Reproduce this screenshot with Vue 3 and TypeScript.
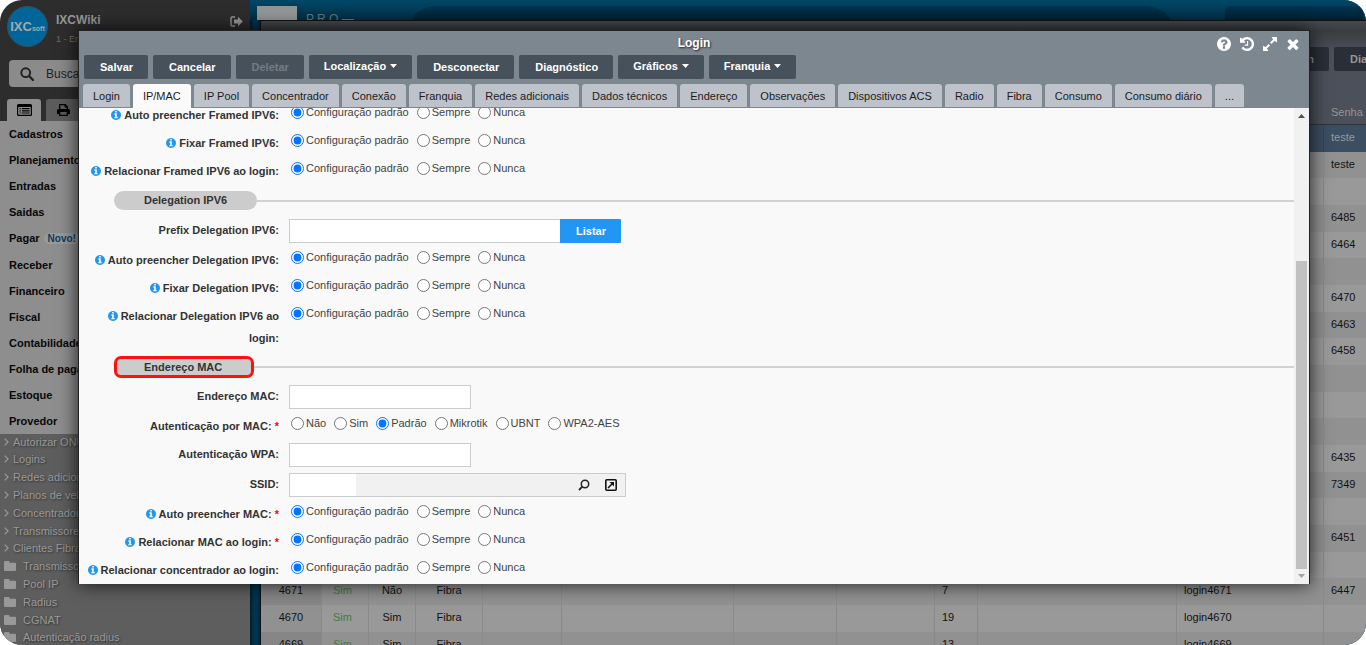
<script setup lang="ts">
import { ref, reactive } from 'vue'

interface ListRow {
  id?: string
  active?: string
  online?: string
  kind?: string
  count?: string
  login?: string
  password?: string
}

interface Field {
  id: string
  label: string
  info?: boolean
  required?: boolean
  type: 'radio' | 'text' | 'lookup' | 'prefix' | 'section'
  options?: string[]
  highlighted?: boolean
}

const menu = [
  'Cadastros', 'Planejamento', 'Entradas', 'Saidas', 'Pagar', 'Receber',
  'Financeiro', 'Fiscal', 'Contabilidade', 'Folha de pagamento', 'Estoque', 'Provedor',
]

const submenu = [
  { text: 'Autorizar ONU', folder: false },
  { text: 'Logins', folder: false },
  { text: 'Redes adicionais', folder: false },
  { text: 'Planos de velocidade', folder: false },
  { text: 'Concentradores', folder: false },
  { text: 'Transmissores', folder: false },
  { text: 'Clientes Fibra', folder: false },
  { text: 'Transmissores', folder: true },
  { text: 'Pool IP', folder: true },
  { text: 'Radius', folder: true },
  { text: 'CGNAT', folder: true },
  { text: 'Autenticação radius', folder: true },
]

const rows: ListRow[] = [
  { password: 'teste' }, { password: 'teste' }, {}, { password: '6485' }, { password: '6464' },
  {}, { password: '6470' }, { password: '6463' }, { password: '6458' }, {}, {}, {},
  { password: '6435' }, { password: '7349' }, {}, { password: '6451' }, {},
  { id: '4671', active: 'Sim', online: 'Não', kind: 'Fibra', count: '7', login: 'login4671', password: '6447' },
  { id: '4670', active: 'Sim', online: 'Sim', kind: 'Fibra', count: '19', login: 'login4670' },
  { id: '4669', active: 'Sim', online: 'Sim', kind: 'Fibra', count: '13', login: 'login4669' },
]

const actions = [
  { text: 'Salvar' },
  { text: 'Cancelar' },
  { text: 'Deletar', disabled: true },
  { text: 'Localização', menu: true },
  { text: 'Desconectar' },
  { text: 'Diagnóstico' },
  { text: 'Gráficos', menu: true },
  { text: 'Franquia', menu: true },
]

const tabs = [
  'Login', 'IP/MAC', 'IP Pool', 'Concentrador', 'Conexão', 'Franquia', 'Redes adicionais',
  'Dados técnicos', 'Endereço', 'Observações', 'Dispositivos ACS', 'Radio', 'Fibra',
  'Consumo', 'Consumo diário', '...',
]
const activeTab = ref('IP/MAC')

const standard = ['Configuração padrão', 'Sempre', 'Nunca']
const fields: Field[] = [
  { id: 'framed-auto', label: 'Auto preencher Framed IPV6:', info: true, type: 'radio', options: standard },
  { id: 'framed-fix', label: 'Fixar Framed IPV6:', info: true, type: 'radio', options: standard },
  { id: 'framed-link', label: 'Relacionar Framed IPV6 ao login:', info: true, type: 'radio', options: standard },
  { id: 'sec-delegation', label: 'Delegation IPV6', type: 'section' },
  { id: 'prefix', label: 'Prefix Delegation IPV6:', type: 'prefix' },
  { id: 'deleg-auto', label: 'Auto preencher Delegation IPV6:', info: true, type: 'radio', options: standard },
  { id: 'deleg-fix', label: 'Fixar Delegation IPV6:', info: true, type: 'radio', options: standard },
  { id: 'deleg-link', label: 'Relacionar Delegation IPV6 ao login:', info: true, type: 'radio', options: standard },
  { id: 'sec-mac', label: 'Endereço MAC', type: 'section', highlighted: true },
  { id: 'mac', label: 'Endereço MAC:', type: 'text' },
  { id: 'mac-auth', label: 'Autenticação por MAC:', required: true, type: 'radio', options: ['Não', 'Sim', 'Padrão', 'Mikrotik', 'UBNT', 'WPA2-AES'] },
  { id: 'wpa', label: 'Autenticação WPA:', type: 'text' },
  { id: 'ssid', label: 'SSID:', type: 'lookup' },
  { id: 'mac-auto', label: 'Auto preencher MAC:', info: true, required: true, type: 'radio', options: standard },
  { id: 'mac-link', label: 'Relacionar MAC ao login:', info: true, required: true, type: 'radio', options: standard },
  { id: 'conc-link', label: 'Relacionar concentrador ao login:', info: true, type: 'radio', options: standard },
]

const values = reactive<Record<string, string>>({})
for (const f of fields) {
  values[f.id] = f.type === 'radio' ? (f.id === 'mac-auth' ? 'Padrão' : standard[0]) : ''
}

const icons = [
  { name: 'Ajuda', d: 'M1024 1376v-192q0-14-9-23t-23-9h-192q-14 0-23 9t-9 23v192q0 14 9 23t23 9h192q14 0 23-9t9-23zm256-672q0-88-55.5-163t-138.5-116-170-41q-243 0-371 213-15 24 8 42l132 100q7 6 19 6 16 0 25-12 53-68 86-92 34-24 86-24 48 0 85.5 26t37.5 59q0 38-20 61t-68 45q-63 28-115.5 86.5t-52.5 125.5v36q0 14 9 23t23 9h192q14 0 23-9t9-23q0-19 21.5-49.5t54.5-49.5q32-18 49-28.5t46-35 44.5-48 28-60.5 12.5-81zm384 192q0 209-103 385.5t-279.5 279.5-385.5 103-385.5-103-279.5-279.5-103-385.5 103-385.5 279.5-279.5 385.5-103 385.5 103 279.5 279.5 103 385.5z' },
  { name: 'Histórico', d: 'M1664 896q0 156-61 298t-164 245-245 164-298 61q-172 0-327-72.5t-264-204.5q-7-10-6.5-22.5t8.5-20.5l137-138q10-9 25-9 16 2 23 12 73 95 179 147t225 52q104 0 198.5-40.5t163.5-109.5 109.5-163.5 40.5-198.5-40.5-198.5-109.5-163.5-163.5-109.5-198.5-40.5q-98 0-188 35.5t-160 101.5l137 138q31 30 14 69-17 40-59 40h-448q-26 0-45-19t-19-45v-448q0-42 40-59 39-17 69 14l130 129q107-101 244.5-156.5t284.5-55.5q156 0 298 61t245 164 164 245 61 298zm-640-288v448q0 14-9 23t-23 9h-320q-14 0-23-9t-9-23v-64q0-14 9-23t23-9h224v-352q0-14 9-23t23-9h64q14 0 23 9t9 23z' },
  { name: 'Expandir', d: 'M883 1056q0 13-10 23l-332 332 144 144q19 19 19 45t-19 45-45 19h-448q-26 0-45-19t-19-45v-448q0-26 19-45t45-19 45 19l144 144 332-332q10-10 23-10t23 10l114 114q10 10 10 23zm781-864v448q0 26-19 45t-45 19-45-19l-144-144-332 332q-10 10-23 10t-23-10l-114-114q-10-10-10-23t10-23l332-332-144-144q-19-19-19-45t19-45 45-19h448q26 0 45 19t19 45z' },
  { name: 'Fechar', d: 'M1490 1322q0 40-28 68l-136 136q-28 28-68 28t-68-28l-294-294-294 294q-28 28-68 28t-68-28l-136-136q-28-28-28-68t28-68l294-294-294-294q-28-28-28-68t28-68l136-136q28-28 68-28t68 28l294 294 294-294q28-28 68-28t68 28l136 136q28 28 28 68t-28 68l-294 294 294 294q28 28 28 68z' },
]
const infoPath = 'M1024 1376v-160q0-14-9-23t-23-9h-96v-512q0-14-9-23t-23-9h-320q-14 0-23 9t-9 23v160q0 14 9 23t23 9h96v320h-96q-14 0-23 9t-9 23v160q0 14 9 23t23 9h448q14 0 23-9t9-23zm-128-896v-160q0-14-9-23t-23-9h-192q-14 0-23 9t-9 23v160q0 14 9 23t23 9h192q14 0 23-9t9-23zm640 416q0 209-103 385.5t-279.5 279.5-385.5 103-385.5-103-279.5-279.5-103-385.5 103-385.5 279.5-279.5 385.5-103 385.5 103 279.5 279.5 103 385.5z'
</script>

<template>
  <div class="desktop">
    <aside class="sidebar">
      <header class="profile">
        <div class="logo"><b>IXC</b><small>soft</small></div>
        <div class="who">
          <strong>IXCWiki</strong>
          <span>1 - Empresa</span>
        </div>
        <button class="exit" aria-label="Sair">
          <svg width="13" height="11" viewBox="0 0 13 11">
            <path d="M5 1H2.200A1.200 1.200 0 0 0 1 2.200v6.600A1.200 1.200 0 0 0 2.200 10H5" fill="none" stroke="currentColor" stroke-width="1.400" />
            <path d="M4 3.600h4V.8l4.800 4.700L8 10.200V7.400H4z" fill="currentColor" />
          </svg>
        </button>
      </header>
      <label class="search">
        <svg width="14" height="14" viewBox="0 0 14 14">
          <circle cx="5.700" cy="5.700" r="4.400" fill="none" stroke="currentColor" stroke-width="2" />
          <path d="M9 9l4 4" stroke="currentColor" stroke-width="2.400" stroke-linecap="round" />
        </svg>
        <input type="text" placeholder="Buscar" aria-label="Buscar" />
      </label>
      <div class="side-tabs">
        <button class="on" aria-label="Menu">
          <svg width="15" height="12" viewBox="0 0 15 12">
            <path d="M1.500 0h12A1.500 1.500 0 0 1 15 1.500v9A1.500 1.500 0 0 1 13.500 12h-12A1.500 1.500 0 0 1 0 10.500v-9A1.500 1.500 0 0 1 1.500 0zM1.200 3v7.300q0 .5.5.5h11.600q.5 0 .5-.5V3z" fill-rule="evenodd" />
            <path d="M2.500 4h1.200v1.200H2.500zm0 2.200h1.200v1.200H2.500zm0 2.200h1.200v1.200H2.500zM4.800 4h7.800v1.200H4.800zm0 2.200h7.800v1.200H4.800zm0 2.200h7.800v1.200H4.800z" />
          </svg>
        </button>
        <button aria-label="Imprimir">
          <svg width="13" height="12" viewBox="0 0 13 12">
            <path d="M2.700 5.500V.7h5.600l2 2v2.800" fill="none" stroke="#000" stroke-width="1.300" />
            <path d="M8 .7v2.400h2.300" fill="none" stroke="#000" />
            <path d="M1.500 5h10A1.500 1.500 0 0 1 13 6.500V10h-2.200V8H2.200v2H0V6.500A1.500 1.500 0 0 1 1.500 5z" />
            <path d="M2.700 8v3.300h7.600V8" fill="none" stroke="#000" stroke-width="1.300" />
          </svg>
        </button>
      </div>
      <nav class="menu">
        <a v-for="item in menu" :key="item" href="#">{{ item }}<em v-if="item === 'Pagar'">Novo!</em></a>
      </nav>
      <nav class="submenu">
        <a v-for="(item, i) in submenu" :key="i" href="#" :class="{ folder: item.folder }">
          <svg v-if="item.folder" width="12" height="10" viewBox="0 0 12 10">
            <path d="M1 0h3.500a1 1 0 0 1 1 1v.8H11a1 1 0 0 1 1 1V9a1 1 0 0 1-1 1H1a1 1 0 0 1-1-1V1a1 1 0 0 1 1-1z" fill="currentColor" />
          </svg>
          <svg v-else width="5" height="8" viewBox="0 0 5 8">
            <path d="M.7.7L4 4 .7 7.300" fill="none" stroke="currentColor" stroke-width="1.200" />
          </svg>
          {{ item.text }}
        </a>
      </nav>
    </aside>

    <main class="workspace">
      <div class="topbar">
        <div class="thumb"></div>
        <span class="brand">P R O —</span>
        <div class="pane wide"></div>
        <div class="pane narrow"></div>
      </div>
      <section class="list">
        <div class="list-head">
          <button>Login</button>
          <button>Diagnóstico</button>
        </div>
        <table>
          <colgroup>
            <col v-for="n in 12" :key="n" :class="'c' + n" />
          </colgroup>
          <thead>
            <tr><th v-for="n in 11" :key="n"></th><th>Senha</th></tr>
          </thead>
          <tbody>
            <tr v-for="(r, i) in rows" :key="i" :class="{ selected: i === 0 }">
              <td class="mid">{{ r.id }}</td>
              <td class="mid yes">{{ r.active }}</td>
              <td class="mid">{{ r.online }}</td>
              <td class="mid">{{ r.kind }}</td>
              <td></td><td></td><td></td><td></td>
              <td>{{ r.count }}</td>
              <td></td>
              <td>{{ r.login }}</td>
              <td>{{ r.password }}</td>
            </tr>
          </tbody>
        </table>
      </section>
    </main>

    <div class="dialog" role="dialog" aria-labelledby="dialog-title">
      <header class="titlebar">
        <h1 id="dialog-title">Login</h1>
        <div class="window-tools">
          <button v-for="icon in icons" :key="icon.name" :aria-label="icon.name">
            <svg width="14" height="14" viewBox="128 128 1536 1536"><path :d="icon.d" fill="#fff" /></svg>
          </button>
        </div>
      </header>
      <div class="actions">
        <button v-for="a in actions" :key="a.text" :disabled="a.disabled" :class="{ drop: a.menu }">
          {{ a.text }}<svg v-if="a.menu" width="7" height="4" viewBox="0 0 7 4"><path d="M0 0h7L3.500 4z" fill="currentColor" /></svg>
        </button>
      </div>
      <div class="tabs" role="tablist">
        <button v-for="t in tabs" :key="t" role="tab" :aria-selected="t === activeTab" :class="{ on: t === activeTab }" @click="activeTab = t">{{ t }}</button>
      </div>
      <div class="body">
        <form class="form" @submit.prevent>
          <template v-for="f in fields" :key="f.id">
            <div v-if="f.type === 'section'" class="section" :class="{ marked: f.highlighted }">
              <h2>{{ f.label }}</h2>
            </div>
            <div v-else class="row" :class="{ tall: f.type !== 'radio' }">
              <component :is="f.type === 'radio' ? 'span' : 'label'" :id="f.id + '-label'" class="caption" :for="f.type === 'radio' ? undefined : f.id">
                <svg v-if="f.info" class="info" width="10" height="10" viewBox="0 128 1536 1536"><path :d="infoPath" fill="#2196f3" /></svg>{{ f.label }}<i v-if="f.required"> *</i>
              </component>
              <div v-if="f.type === 'radio'" class="radios" role="radiogroup" :aria-labelledby="f.id + '-label'">
                <label v-for="o in f.options" :key="o"><input v-model="values[f.id]" type="radio" :name="f.id" :value="o" />{{ o }}</label>
              </div>
              <div v-else-if="f.type === 'prefix'" class="control">
                <input :id="f.id" v-model="values[f.id]" class="box prefix" type="text" />
                <button class="primary">Listar</button>
              </div>
              <div v-else-if="f.type === 'lookup'" class="control">
                <div class="lookup">
                  <input :id="f.id" v-model="values[f.id]" type="text" />
                  <button aria-label="Pesquisar">
                    <svg width="12" height="12" viewBox="0 0 12 12">
                      <circle cx="7" cy="5" r="3.700" fill="none" stroke="#222" stroke-width="1.500" />
                      <path d="M4.300 7.700L1 11" stroke="#222" stroke-width="1.800" />
                    </svg>
                  </button>
                  <button aria-label="Abrir">
                    <svg width="12" height="12" viewBox="0 0 12 12">
                      <rect x=".8" y=".8" width="10.400" height="10.400" rx="1" fill="none" stroke="#111" stroke-width="1.600" />
                      <path d="M3 9l4-4" stroke="#111" stroke-width="1.600" />
                      <path d="M4.500 3H9v4.500z" fill="#111" />
                    </svg>
                  </button>
                </div>
              </div>
              <div v-else class="control">
                <input :id="f.id" v-model="values[f.id]" class="box" type="text" />
              </div>
            </div>
          </template>
        </form>
        <div class="scroll" aria-hidden="true">
          <svg width="7" height="4" viewBox="0 0 7 4"><path d="M3.500 0L7 4H0z" fill="#505050" /></svg>
          <div class="rail"><div class="grip"></div></div>
          <svg width="7" height="4" viewBox="0 0 7 4"><path d="M0 0h7L3.500 4z" fill="#a3a3a3" /></svg>
        </div>
      </div>
    </div>
  </div>
</template>

<style>
body {
  background: #fff;
}
</style>

<style scoped>
.desktop, .desktop * {
  box-sizing: border-box;
}
.desktop {
  position: relative;
  display: grid;
  grid-template-columns: 250px minmax(0, 1fr);
  height: 100vh;
  overflow: hidden;
  border-radius: 22px;
  font: 11px/14px "Liberation Sans", Arial, sans-serif;
  color: #111;
}
button, input {
  font: inherit;
  color: inherit;
  border: 0;
  margin: 0;
  padding: 0;
  background: none;
}
a {
  color: inherit;
  text-decoration: none;
}

/* Sidebar */
.sidebar {
  display: flex;
  flex-direction: column;
  min-height: 0;
  overflow: hidden;
  background: #2d2d2d;
}
.profile {
  display: flex;
  flex: none;
  gap: 8px;
  height: 60px;
  padding: 6px 7px 0;
  color: #999;
}
.logo {
  display: flex;
  flex: none;
  align-items: center;
  justify-content: center;
  width: 41px;
  height: 41px;
  border: 1px solid #34515c;
  border-radius: 50%;
  background: #00669a;
  color: #a5a9ab;
}
.logo b {
  font-size: 13px;
}
.logo small {
  font-size: 7px;
  font-weight: bold;
  padding-top: 4px;
}
.who {
  display: flex;
  flex: 1;
  flex-direction: column;
  gap: 5px;
  padding-top: 7px;
}
.who strong {
  font-size: 12px;
}
.who span {
  font-size: 9px;
  color: #6c6c6c;
}
.exit {
  align-self: flex-start;
  padding-top: 10px;
}
.exit svg {
  display: block;
}
.search {
  display: flex;
  flex: none;
  align-items: center;
  gap: 12px;
  height: 27px;
  margin: 0 9px;
  padding: 0 11px;
  border-radius: 4px;
  background: #8b8b8b;
  color: #222;
}
.search input {
  width: 120px;
  font-size: 12px;
}
.search input::placeholder {
  color: #222;
  opacity: 1;
}
.side-tabs {
  display: flex;
  flex: none;
  gap: 5px;
  margin-top: 12px;
  padding-left: 7px;
}
.side-tabs button {
  width: 34px;
  height: 22px;
  border-radius: 3px 3px 0 0;
  background: #5c5c5c;
}
.side-tabs .on {
  background: #8e8e8e;
}
.side-tabs svg {
  display: block;
  margin: 0 auto;
}
.menu {
  display: flex;
  flex: none;
  flex-direction: column;
  background: #8e8e8e;
  font-weight: bold;
  color: #080808;
  white-space: nowrap;
}
.menu a {
  height: 26px;
  padding-left: 9px;
  line-height: 26px;
}
.menu a:nth-child(5) {
  height: 27px;
}
.menu em {
  margin-left: 4px;
  padding: 0 4px;
  border-radius: 6px;
  background: #9a9a9a;
  color: #0c3d5a;
  font-style: normal;
  font-size: 10px;
}
.submenu {
  flex: 1;
  min-height: 0;
  background: #5e5e5e;
  color: #999;
  text-shadow: 1px 1px 2px #333;
}
.submenu a {
  display: flex;
  align-items: center;
  gap: 4px;
  height: 18px;
  padding: 0 0 2px 4px;
  white-space: nowrap;
}
.submenu a:nth-child(5n + 1) {
  height: 17px;
}
.submenu .folder {
  gap: 7px;
}
.submenu svg {
  flex: none;
}

/* Workspace behind the dialog */
.workspace {
  display: flex;
  flex-direction: column;
  min-width: 0;
  min-height: 0;
  padding-left: 10px;
  background: linear-gradient(to right, #001f30, #003450 4px, #003450 7px, #00283c 10px);
}
.topbar {
  display: flex;
  flex: none;
  align-items: flex-start;
  height: 20px;
  margin-left: -10px;
  padding: 6px 3px 0 7px;
  overflow: hidden;
  background: linear-gradient(#004768, #00415f 6px, #002c42);
}
.thumb {
  flex: none;
  width: 40px;
  height: 14px;
  background: #929596;
}
.brand {
  flex: none;
  width: 114px;
  padding: 6px 0 0 9px;
  font-size: 12px;
  line-height: 14px;
  color: #60747f;
}
.pane {
  height: 24px;
  background: linear-gradient(#003450, #001f2f 14px);
}
.pane.wide {
  flex: 1;
  max-width: 760px;
  border-radius: 28px 28px 0 0 / 18px 18px 0 0;
}
.pane.narrow {
  width: 138px;
  margin-left: auto;
  border-radius: 6px 6px 0 0;
}
.list {
  flex: 1;
  min-height: 0;
  overflow: hidden;
  border-top: 1px solid #111;
  border-left: 1px solid #111;
  background: #4c505a;
}
.list-head {
  display: flex;
  justify-content: flex-end;
  gap: 5px;
  height: 76px;
  margin-right: -63px;
  padding-top: 26px;
  background: linear-gradient(#464a4d, #3a3d40 10px, #4c505a 30px);
}
.list-head button {
  height: 24px;
  padding: 0 16px;
  border-radius: 2px;
  background: #2a2f37;
  color: #969696;
  font-weight: bold;
}
.list-head button:first-child {
  padding-right: 15px;
}
table {
  width: 100%;
  table-layout: fixed;
  border-collapse: separate;
  border-spacing: 0;
}
.c1 { width: 61px; }
.c2 { width: 47px; }
.c3 { width: 47px; }
.c4 { width: 67px; }
.c5 { width: 79px; }
.c6 { width: 172px; }
.c7 { width: 103px; }
.c8 { width: 98px; }
.c9 { width: 43px; }
.c10 { width: 199px; }
.c11 { width: 147px; }
th, td {
  height: 27px;
  padding: 0 7px 3px;
  overflow: hidden;
  text-align: left;
  white-space: nowrap;
  border-right: 1px solid #8a8a8a;
}
th {
  height: 28px;
  padding: 2px 7px 0;
  border-right: 0;
  border-bottom: 1px solid #30343a;
  color: #959595;
  font-weight: normal;
}
tr:nth-child(3n + 2) td {
  height: 26px;
}
tr:nth-child(odd) td {
  background: #999;
}
tr:nth-child(even) td {
  background: #919191;
}
tr:nth-child(odd) td:first-child {
  background: #919191;
}
tr:nth-child(even) td:first-child {
  background: #868686;
}
tr.selected td, tr.selected td:first-child {
  background: #3b4e62;
  border-color: #354557;
  color: #999;
}
td.mid {
  padding: 0 0 3px;
  text-align: center;
}
td:last-child {
  border-right: 0;
}
td.yes {
  padding-right: 5px;
  color: #437a45;
}

/* Dialog */
.dialog {
  position: absolute;
  top: 30px;
  right: 56px;
  bottom: 61px;
  left: 78px;
  display: flex;
  flex-direction: column;
  border: 1px solid #222;
  border-bottom: 0;
  background: #7d8790;
  box-shadow: 0 0 18px rgba(0, 0, 0, 0.8);
}
.titlebar {
  display: grid;
  grid-template-columns: 1fr auto 1fr;
  flex: none;
  align-items: center;
  height: 24px;
}
.titlebar h1 {
  grid-column: 2;
  margin: 0;
  font-size: 12px;
  line-height: 24px;
  color: #fff;
  text-shadow: 1px 1px 2px #222;
}
.window-tools {
  display: flex;
  justify-content: flex-end;
  gap: 9px;
  padding: 2px 9px 0 0;
}
.window-tools svg {
  display: block;
}
.actions {
  display: flex;
  flex: none;
  gap: 5px;
  padding: 0 5px;
}
.actions button {
  height: 24px;
  padding: 0 15px 0 16px;
  border-radius: 2px;
  background: #47515c;
  color: #fff;
  font-weight: bold;
  white-space: nowrap;
}
.actions .drop {
  padding: 0 15px 2px;
}
.actions svg {
  margin: 0 0 2px 4px;
}
.actions button:disabled {
  color: #737c85;
}
.tabs {
  display: flex;
  flex: none;
  gap: 3px;
  height: 29px;
  padding: 5px 4px 0;
}
.tabs button {
  height: 23px;
  padding: 0 10px;
  border-radius: 3px 3px 0 0;
  background: #bdc2cb;
  color: #1c1c1c;
  white-space: nowrap;
}
.tabs .on {
  height: 24px;
  background: #fafafa;
}
.body {
  display: flex;
  flex: 1;
  min-height: 0;
  overflow: hidden;
  background: #f9f9f9;
}
.form {
  flex: 1;
  margin-top: -7px;
  color: #333;
}
.row {
  display: grid;
  grid-template-columns: 195px 1fr;
  gap: 10px;
  min-height: 28px;
  padding-left: 5px;
}
.row.tall {
  min-height: 30px;
}
.caption {
  padding: 3px 0;
  font-weight: bold;
  line-height: 22px;
  text-align: right;
}
.caption i {
  color: #f00;
  font-style: normal;
}
.info {
  margin-right: 3px;
  vertical-align: -1px;
}
.radios {
  display: flex;
  gap: 8px;
  height: 22px;
  padding-left: 2px;
  color: #444;
}
.radios label {
  display: flex;
  align-items: center;
  gap: 2px;
}
.radios input {
  width: 13px;
  height: 13px;
}
.control {
  display: flex;
  align-items: flex-start;
  padding-top: 3px;
}
.box {
  width: 182px;
  height: 24px;
  padding: 0 6px;
  border: 1px solid #ccc;
  background: #fff;
}
.box.prefix {
  width: 271px;
  border-right: 0;
}
.primary {
  height: 24px;
  padding: 0 15px 0 16px;
  background: #2196f3;
  border-radius: 0 1px 1px 0;
  color: #fff;
  font-weight: bold;
}
.lookup {
  display: flex;
  gap: 15px;
  width: 337px;
  height: 24px;
  padding-right: 8px;
  border: 1px solid #ccc;
  background: #f1f1f1;
}
.lookup input {
  width: 66px;
  margin-right: auto;
  padding: 0 6px;
  background: #fff;
}
.lookup svg {
  display: block;
}
.section {
  display: flex;
  align-items: center;
  padding: 6px 0 6px 35px;
}
.section::after {
  content: "";
  flex: 1;
  height: 2px;
  background: #d2d2d2;
}
.section h2 {
  margin: 0;
  padding: 0 30px;
  border-radius: 10px;
  background: #ccc;
  font-size: 11px;
  line-height: 19px;
}
.section.marked {
  padding-top: 4px;
  padding-bottom: 4px;
}
.section.marked h2 {
  padding: 0 29px 0 27px;
  border: 3px solid #f11;
  border-radius: 7px;
  line-height: 16px;
}
.scroll {
  display: flex;
  flex: none;
  flex-direction: column;
  align-items: center;
  width: 15px;
  padding: 6px 0;
  background: #f1f1f1;
}
.rail {
  flex: 1;
  display: flex;
  align-items: flex-end;
  padding: 5px 0;
}
.grip {
  width: 11px;
  height: 69%;
  background: #c1c1c1;
}
</style>
